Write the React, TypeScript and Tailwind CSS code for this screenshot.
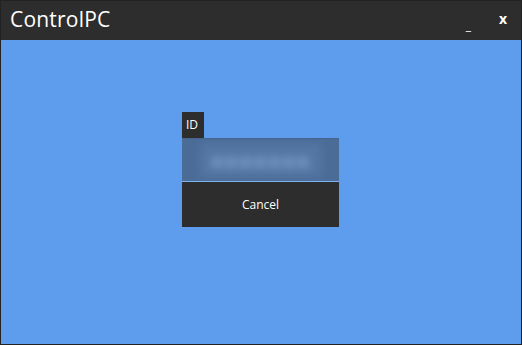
export default function App() {
  return (
    <div
      className="w-[522px] h-[345px] flex flex-col border border-[#222] bg-[#5e9ced] overflow-hidden"
      style={{ fontFamily: '"Open Sans", "Noto Sans", sans-serif' }}
    >
      <div className="h-[39px] bg-[#2d2d2d] flex items-center shrink-0">
        <span className="text-white text-[21px] pl-[9px] leading-none pb-[2px] tracking-[0.2px]">ControlPC</span>
        <span className="ml-auto text-white text-[12px] leading-none mt-[10px] mr-[28px]">_</span>
        <span className="text-white text-[14px] font-bold leading-none mr-[14px] pb-[4px]">x</span>
      </div>
      <div className="flex-1 flex flex-col items-start pl-[181px] pt-[72px]">
        <div className="w-[22px] h-[26px] bg-[#2d2d2d] text-white text-[12px] flex items-center pl-[4px]">ID</div>
        <div className="w-[157px] h-[43px] bg-[#4b6c97] border-t border-[#44648c] flex items-center justify-center overflow-hidden">
          <div className="w-[122px] h-[34px] bg-[#5476a3] blur-[4px] flex items-center justify-center text-[#7395c2] text-[22px] tracking-[1px] font-bold">
            ■■■■■■■
          </div>
        </div>
        <div className="w-[157px] h-[1px] bg-[#7fb0f0]" />
        <div className="w-[157px] h-[45px] bg-[#2d2d2d] text-white text-[12px] flex items-center justify-center">Cancel</div>
      </div>
    </div>
  );
}
